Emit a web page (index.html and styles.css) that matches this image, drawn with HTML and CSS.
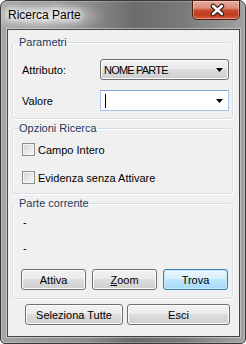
FILE: index.html
```html
<!DOCTYPE html>
<html lang="it">
<head>
    <meta charset="UTF-8">
    <meta name="viewport" content="width=device-width, initial-scale=1.0">
    <title>Ricerca Parte</title>
    <link rel="stylesheet" href="styles.css">
</head>
<body>
    <div class="window">
        <div class="titlebar">
            <span class="title">Ricerca Parte</span>
            <button class="close-btn" aria-label="Chiudi">
                <svg width="48" height="19" viewBox="0 0 48 19">
                    <path d="M21.5 6 L30.5 14 M30.5 6 L21.5 14" stroke="#3a1a14" stroke-width="5" stroke-linecap="round" fill="none"/>
                    <path d="M21.5 6 L30.5 14 M30.5 6 L21.5 14" stroke="#ffffff" stroke-width="2.6" stroke-linecap="round" fill="none"/>
                </svg>
            </button>
        </div>

        <div class="client">
            <fieldset class="group group-params">
                <legend>Parametri</legend>
                <div class="field-row">
                    <label class="field-label">Attributo:</label>
                    <div class="combo combo-button">
                        <span class="combo-text">NOME PARTE</span>
                        <svg class="arrow" width="7" height="4" viewBox="0 0 7 4"><polygon points="0,0 7,0 3.5,4" fill="#000"/></svg>
                    </div>
                </div>
                <div class="field-row field-row-next">
                    <label class="field-label">Valore</label>
                    <div class="combo combo-edit">
                        <span class="caret"></span>
                        <svg class="arrow" width="7" height="4" viewBox="0 0 7 4"><polygon points="0,0 7,0 3.5,4" fill="#000"/></svg>
                    </div>
                </div>
            </fieldset>

            <fieldset class="group group-options">
                <legend>Opzioni Ricerca</legend>
                <label class="check-row">
                    <span class="checkbox"></span>
                    <span>Campo Intero</span>
                </label>
                <label class="check-row check-row-next">
                    <span class="checkbox"></span>
                    <span>Evidenza senza Attivare</span>
                </label>
            </fieldset>

            <fieldset class="group group-current">
                <legend>Parte corrente</legend>
                <div class="info-line">-</div>
                <div class="info-line info-line-next">-</div>
                <div class="button-row">
                    <button class="btn btn-third">Attiva</button>
                    <button class="btn btn-third"><u>Z</u>oom</button>
                    <button class="btn btn-third btn-default">Trova</button>
                </div>
            </fieldset>

            <div class="footer-row">
                <button class="btn btn-select">Seleziona Tutte</button>
                <button class="btn btn-exit">Esci</button>
            </div>
        </div>
    </div>
</body>
</html>
```

FILE: styles.css
```css
html, body {
    margin: 0;
    background: #fff;
}
body {
    font-family: "Liberation Sans", Arial, sans-serif;
    font-size: 11px;
    color: #000;
}
.window {
    width: 246px;
    height: 344px;
    box-sizing: border-box;
    border: 1px solid #383838;
    border-radius: 7px 7px 5px 5px;
    padding: 0 5px 6px 6px;
    background: linear-gradient(90deg, #a6a6a6 0%, #9c9c9c 10%, #8e8e8e 35%, #6b6b6b 55%, #7a7a7a 75%, #a2a2a2 100%);
    box-shadow: inset 0 0 0 1px rgba(255, 255, 255, 0.22);
    display: flex;
    flex-direction: column;
}
.titlebar {
    height: 28px;
    margin-left: -6px;
    padding-left: 6px;
    display: flex;
    justify-content: space-between;
    align-items: flex-start;
    background: radial-gradient(ellipse 62px 16px at 44px 15px, rgba(255, 255, 255, 0.6), rgba(255, 255, 255, 0) 100%);
}
.title {
    margin-left: 1px;
    line-height: 28px;
    font-size: 12px;
    color: #000;
    text-shadow: 0 0 8px #fff, 0 0 8px #fff, 0 0 12px #fff, 0 0 4px #fff;
}
.close-btn {
    width: 48px;
    height: 20px;
    margin-top: -1px;
    padding: 0;
    border: 1px solid #4e1d14;
    border-radius: 0 0 5px 5px;
    background: linear-gradient(#e8ab9b 0%, #dc8a75 40%, #c94d31 50%, #c03a1e 78%, #d9633f 100%);
    box-shadow: inset 0 0 0 1px rgba(255, 255, 255, 0.35);
    display: flex;
    align-items: center;
    justify-content: center;
}
.close-btn svg {
    display: block;
    margin: -1px 0 0 -1px;
}
.client {
    flex: 1;
    border: 1px solid #444;
    background: #f0f0f0;
    box-shadow: 0 0 0 1px rgba(255, 255, 255, 0.4);
    padding: 5px 6px 11px 4px;
    display: flex;
    flex-direction: column;
}
.group {
    margin: 0;
    border: 1px solid #d5dfe5;
    border-radius: 3px;
    box-shadow: inset 1px 1px 0 #fff, 1px 1px 0 #fff;
    padding: 0 3px 0 9px;
    min-width: 0;
}
.group legend {
    margin-left: -4px;
    padding: 0 1px;
    line-height: 14px;
    color: #1e395b;
}
.group + .group {
    margin-top: 2px;
}
.group-params {
    padding-top: 10px;
    padding-bottom: 7px;
}
.field-row {
    height: 21px;
    display: flex;
    align-items: center;
}
.field-row-next {
    margin-top: 10px;
}
.field-label {
    width: 78px;
}
.combo {
    width: 129px;
    height: 21px;
    box-sizing: border-box;
    display: flex;
    align-items: center;
    padding: 0 5px 0 3px;
}
.combo .arrow {
    margin-left: auto;
    display: block;
}
.combo-button {
    border: 1px solid #707070;
    border-radius: 3px;
    background: linear-gradient(#f2f2f2 0%, #ebebeb 45%, #dddddd 50%, #cfcfcf 100%);
    box-shadow: inset 0 0 0 1px #fafafa;
}
.combo-text {
    letter-spacing: -0.8px;
}
.combo-edit {
    border: 1px solid #a3c4e6;
    border-top-color: #7ea6d2;
    background: #fff;
    padding-left: 4px;
}
.caret {
    width: 1px;
    height: 14px;
    background: #000;
}
.group-options {
    padding-top: 8px;
    padding-bottom: 9px;
}
.check-row {
    height: 13px;
    display: flex;
    align-items: center;
    gap: 3px;
}
.check-row-next {
    margin-top: 15px;
}
.checkbox {
    width: 13px;
    height: 13px;
    box-sizing: border-box;
    border: 1px solid #8e8f8f;
    background: linear-gradient(135deg, #cfd1d4 0%, #eaeaea 55%, #f8f8f8 100%);
    box-shadow: inset 0 0 0 1px #f4f4f4;
}
.group-current {
    padding-top: 5px;
    padding-bottom: 8px;
}
.info-line {
    line-height: 14px;
    padding-left: 1px;
}
.info-line-next {
    margin-top: 12px;
}
.button-row {
    margin: 14px 0 0 -1px;
    display: flex;
    gap: 6px;
}
.btn {
    height: 21px;
    box-sizing: border-box;
    padding: 0;
    border: 1px solid #707070;
    border-radius: 3px;
    background: linear-gradient(#f2f2f2 0%, #ebebeb 45%, #dddddd 50%, #cfcfcf 100%);
    box-shadow: inset 0 0 0 1px #fcfcfc;
    font-family: "Liberation Sans", Arial, sans-serif;
    font-size: 11px;
    color: #000;
}
.btn-third {
    width: 65px;
}
.btn-default {
    border-color: #3c7fb1;
    background: linear-gradient(#eaf6fd 0%, #d9f0fc 45%, #bee6fd 50%, #a7d9f5 100%);
    box-shadow: inset 0 0 0 1px #c6e8fb;
}
.footer-row {
    margin: 5px 0 0 13px;
    display: flex;
    gap: 4px;
}
.btn-select {
    width: 98px;
}
.btn-exit {
    width: 103px;
}
```
